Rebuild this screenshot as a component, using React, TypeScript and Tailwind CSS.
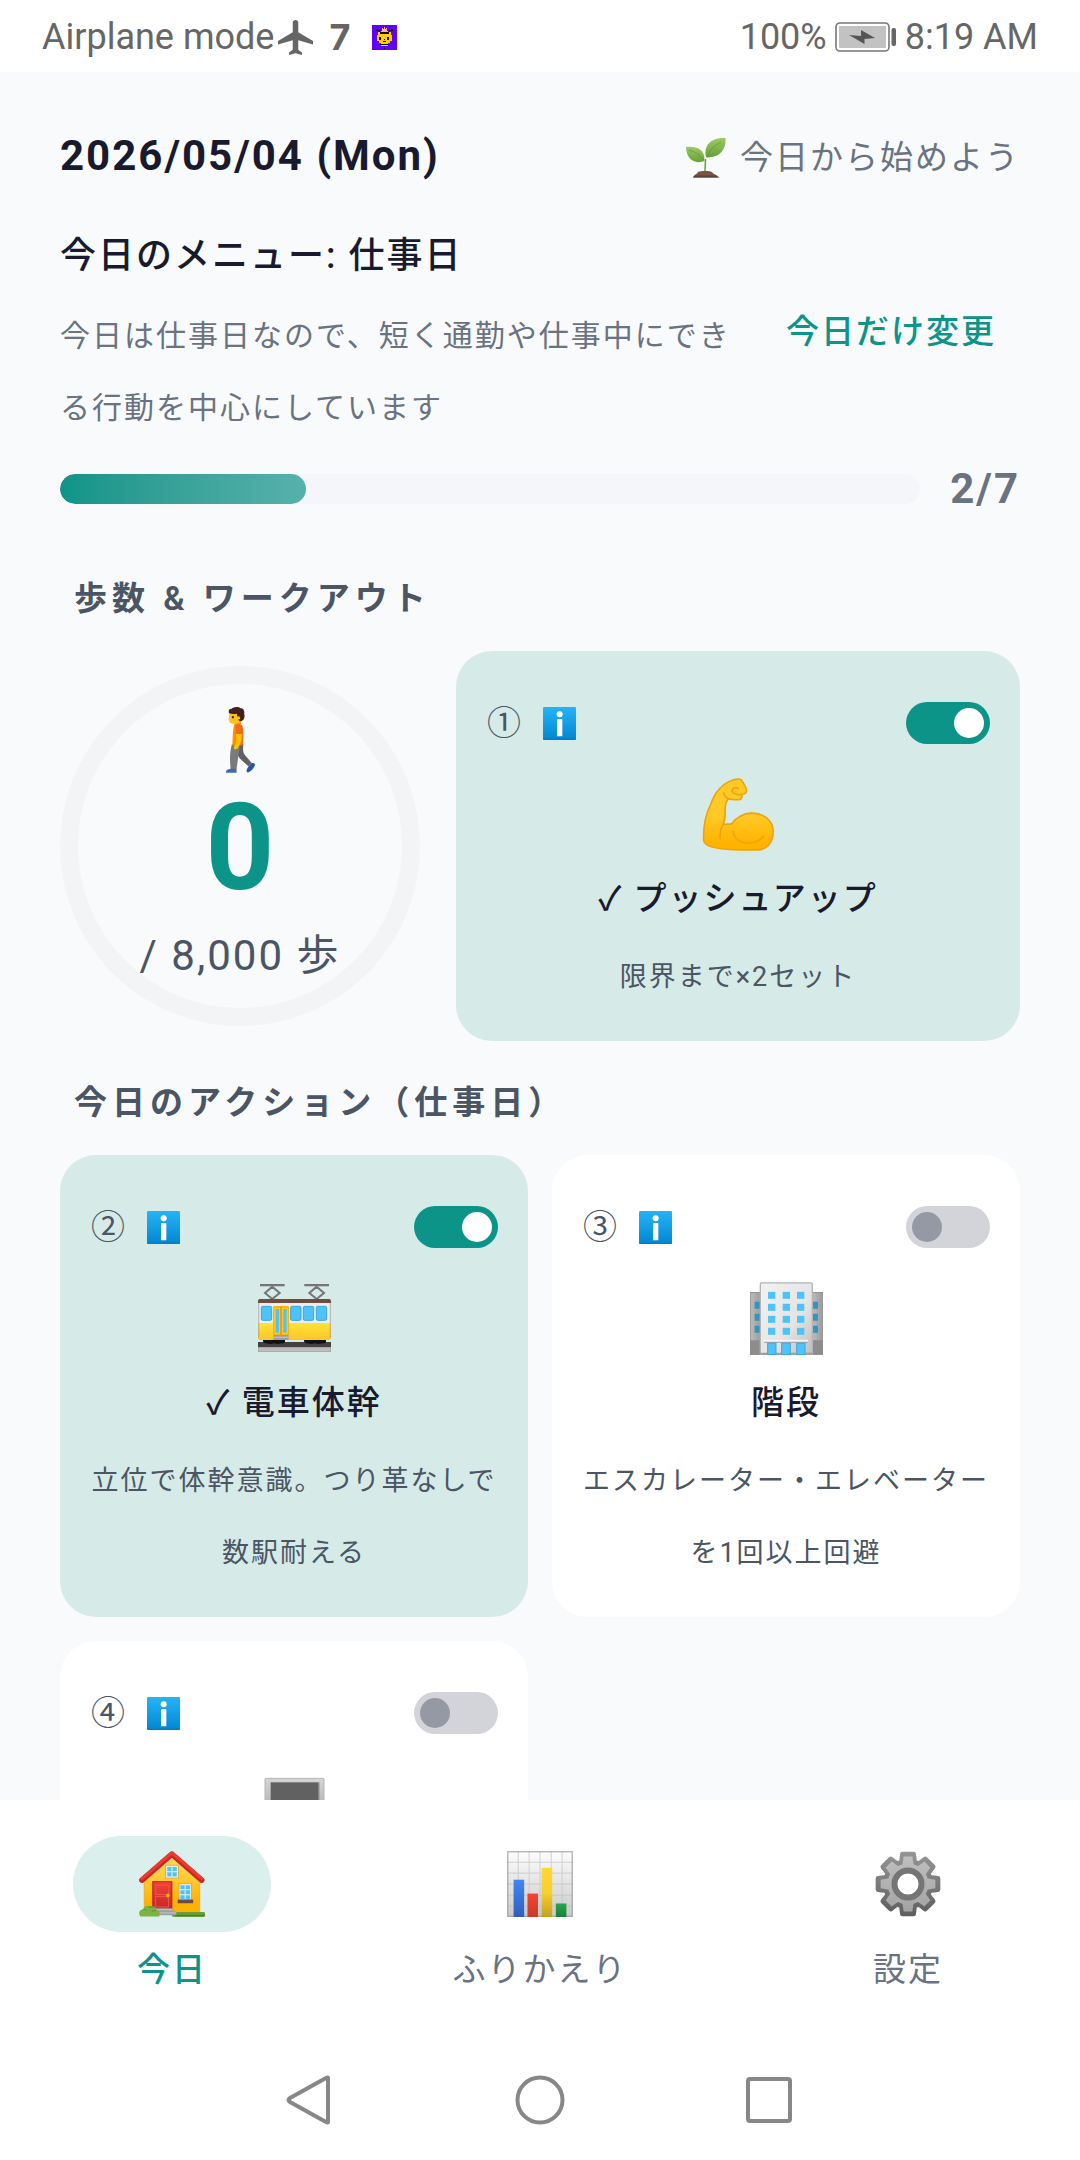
import { useState, type ReactNode } from "react"

/* ---------- Status bar icons ---------- */

function AirplaneIcon() {
  return (
    <svg viewBox="2 2 19 20" className="h-[35px] w-[35px]" fill="#666666" preserveAspectRatio="none" aria-hidden="true">
      <path d="M21 16v-2l-8-5V3.5c0-.83-.67-1.5-1.5-1.5S10 2.67 10 3.5V9l-8 5v2l8-2.5V19l-2 1.5V22l3.5-1 3.5 1v-1.5L13 19v-5.5l8 2.5z" />
    </svg>
  )
}

function BeeIcon() {
  return (
    <svg viewBox="0 0 25 25" className="size-[25px]" shapeRendering="crispEdges" aria-hidden="true">
      <rect width="25" height="25" fill="#6200ff" />
      <path d="M4 4h2v1h2v2h-1v-1h-3zM21 4h-2v1h-2v2h1v-1h3z" fill="#111" />
      <path d="M10 3h1v1h1v-2h1v2h1v-1h1v3h-5z" fill="#ffb199" />
      <path d="M9 6h7v1h3v3h1v6h-2v2h-2v3h-7v-3h-2v-2h-2v-6h1v-3h3z" fill="#ffcc00" />
      <path d="M8 7h9v2h-9zM7 12h2v3h-2zM15 12h2v3h-2zM12 14h1v1h-1zM11 16h3v1h-3zM8 19h8v1h-8zM12 22h1v2h-1z" fill="#111" />
    </svg>
  )
}

function BatteryIcon() {
  return (
    <svg viewBox="0 0 62 30" className="h-[30px] w-[62px]" aria-hidden="true">
      <rect x="1" y="1" width="53" height="28" rx="4" fill="#fff" stroke="#777" strokeWidth="1.6" />
      <rect x="4" y="4" width="47" height="22" rx="1" fill="#c2c2c2" />
      <path d="M14 13l12 1v-6l14 8-10.500 1v5z" fill="#555" />
      <rect x="56.500" y="6" width="4.500" height="18" rx="2" fill="#666" />
    </svg>
  )
}

/* ---------- Content icons ---------- */

function SeedlingIcon() {
  return (
    <svg viewBox="0 0 40 40" className="size-10" aria-hidden="true">
      <defs>
        <linearGradient id="leaf" x1="0" y1="0" x2="0" y2="1">
          <stop offset="0" stopColor="#9ccc65" />
          <stop offset="1" stopColor="#689f38" />
        </linearGradient>
      </defs>
      <path d="M19.500 21c0 4-.5 8-.5 13" stroke="#689f38" strokeWidth="1.500" fill="none" />
      <path d="M7 39.500c1-3 4-3 5-5.500 1-1.500 13-1.500 14 0 1 2.500 5 2.500 7 5.500z" fill="#795548" />
      <path d="M7 39.500l2-2h21l3 2z" fill="#5d4037" />
      <path d="M0 9c9-1 19 1 18.500 14C8 27 0 20 0 9z" fill="url(#leaf)" />
      <path d="M39.500 0c1 11-6 21-19.500 19C17 7 26-1 39.500 0z" fill="url(#leaf)" />
      <path d="M3 12c7 2 11 5 15 10M35 4c-8 4-12 9-14 16" stroke="#558b2f" strokeWidth=".6" fill="none" />
    </svg>
  )
}

function WalkingIcon() {
  return (
    <svg viewBox="0 0 88 200" className="h-[66px] w-[29px]" aria-hidden="true">
      <defs>
        <linearGradient id="shirt" x1="0" y1="0" x2="1" y2="0">
          <stop offset="0" stopColor="#ff9800" />
          <stop offset="1" stopColor="#f4661e" />
        </linearGradient>
      </defs>
      <path d="M36 112l17 0c-2 14-2 24 3 32l22 26-10 10-26-24c-8-8-12-26-10-38z" fill="#616161" />
      <path d="M18 112l24 4-10 72h-18c-3-28-3-50 4-76z" fill="#7b7b7b" />
      <path d="M0 199c-1-8 4-10 14-12h18v12z" fill="#4667b0" />
      <path d="M72 176c4-4 6-6 8-6 4 0 8 2 8 5-2 10-12 20-22 24l-4-5c2-8 4-12 10-18z" fill="#2a56a8" />
      <path d="M26 42h20v14h-20z" fill="#f9a800" />
      <path d="M25 54c6-4 18-5 24 2 5 14 3 44 2 61h-32c2-28 1-48 6-63z" fill="url(#shirt)" />
      <path d="M31 78h16c2 16 0 28-8 40-1 8-8 12-15 9 0-6 1-9 5-14 4-10 1-22 2-35z" fill="#ffc107" />
      <path d="M30 54c10-4 19-2 20 8 1 9 0 14-1 19-6 2-13 1-19-1z" fill="#f06a1a" />
      <path d="M11 16h30v26c-4 12-22 10-30 5-2-4 0-5-3-9z" fill="#fcc21b" />
      <path d="M9 19c-2-8 1-15 6-12C24-2 38-1 45 4c8 0 12 8 10 16 4 10-1 22-9 23-8 0-11-5-10-12-3-4-3-7-2-11-8 2-18 2-25-1z" fill="#43211b" />
      <circle cx="21" cy="31" r="3.500" fill="#43211b" />
      <circle cx="38" cy="33" r="5" fill="#fcc21b" />
    </svg>
  )
}

function InfoIcon() {
  return (
    <svg viewBox="0 0 99 99" className="size-[33px]" aria-hidden="true">
      <defs>
        <linearGradient id="info" x1="0" y1="0" x2="0" y2="1">
          <stop offset="0" stopColor="#26b4f6" />
          <stop offset="1" stopColor="#0286d1" />
        </linearGradient>
      </defs>
      <rect width="99" height="99" rx="4" fill="url(#info)" />
      <path d="M0 94h99v2a3 3 0 0 1-3 3H3a3 3 0 0 1-3-3z" fill="#0277bd" opacity=".5" />
      <circle cx="50" cy="22" r="9" fill="#fff" />
      <rect x="42" y="36" width="16" height="52" rx="2" fill="#fff" />
    </svg>
  )
}

function MuscleIcon() {
  return (
    <svg viewBox="-2 -2 219 222" className="size-[73px]" aria-hidden="true">
      <defs>
        <linearGradient id="arm" x1="0" y1="0" x2="0" y2="1">
          <stop offset=".5" stopColor="#ffca28" />
          <stop offset=".9" stopColor="#ffb300" />
        </linearGradient>
      </defs>
      <g stroke="#f0a30a" strokeWidth="5" strokeLinejoin="round" strokeLinecap="round">
        <path
          d="M1 183C1 150 6 110 23 78C36 40 62 14 90 4C104 0 112-1 117 5C121 12 124 15 127 22C133 32 134 40 127 45C122 48 118 46 118 52C118 60 114 64 107 64C96 64 86 64 77 61C66 72 66 86 67 100C68 116 65 130 61 139C70 139 78 138 86 138C100 120 118 106 147 105C184 104 213 128 213 160C213 196 193 217 165 217C130 217 90 218 55 213C20 209 1 202 1 183Z"
          fill="url(#arm)"
        />
        <path d="M61 139C52 152 50 165 52 182M91 160C96 204 164 206 184 174M77 61C70 58 64 50 63 44M118 48C104 50 90 46 88 38C88 28 96 26 106 29" fill="none" />
      </g>
    </svg>
  )
}

function TramIcon() {
  return (
    <svg viewBox="0 0 219 204" className="h-[68px] w-[73px]" aria-hidden="true">
      <defs>
        <linearGradient id="tram" x1="0" y1="0" x2="0" y2="1">
          <stop offset="0" stopColor="#fde335" />
          <stop offset="1" stopColor="#fbc52b" />
        </linearGradient>
      </defs>
      <path d="M6 3h74M139 3h74" stroke="#757575" strokeWidth="7" />
      <path d="M43 8l22 19-22 18-22-18zM176 8l22 19-22 18-22-18z" fill="none" stroke="#757575" strokeWidth="6" />
      <rect x="0" y="50" width="219" height="118" rx="6" fill="#eeeeee" />
      <path d="M0 117h219v45q0 6-6 6H6q-6 0-6-6z" fill="url(#tram)" />
      <path d="M2 56v106M217 56v106" stroke="#9e9e9e" strokeWidth="4" opacity=".6" />
      <path d="M0 57v-6q0-6 6-6h207q6 0 6 6v6z" fill="#6d4c41" />
      <g fill="#4fc3f7" stroke="#3da7da" strokeWidth="3">
        <rect x="10" y="67" width="31" height="42" rx="4" />
        <rect x="98" y="67" width="31" height="42" rx="4" />
        <rect x="136" y="67" width="31" height="42" rx="4" />
        <rect x="175" y="67" width="31" height="42" rx="4" />
      </g>
      <rect x="45" y="66" width="48" height="88" rx="4" fill="#ffb300" />
      <rect x="51" y="73" width="14" height="75" fill="#4fc3f7" stroke="#fdc830" strokeWidth="4" />
      <rect x="74" y="73" width="14" height="75" fill="#4fc3f7" stroke="#fdc830" strokeWidth="4" />
      <path d="M69 68v84" stroke="#f59300" strokeWidth="4" />
      <rect x="0" y="174" width="219" height="16" fill="#424242" />
      <rect x="1" y="190" width="217" height="13" fill="#bdbdbd" stroke="#9e9e9e" strokeWidth="2" />
      <path d="M15 168h66v6q-4 6-11 4-11 4-22 0-11 4-22 0-9 1-11-6zM138 168h66v6q-4 6-11 4-11 4-22 0-11 4-22 0-9 1-11-6z" fill="#111" />
      <rect x="46" y="153" width="46" height="15" fill="#9e9e9e" />
      <path d="M46 160h46" stroke="#bdbdbd" strokeWidth="4" />
    </svg>
  )
}

const floors = [29, 65, 101, 137]

function OfficeIcon() {
  return (
    <svg viewBox="0 0 219 218" className="size-[73px]" aria-hidden="true">
      <defs>
        <linearGradient id="tower" x1="0" y1="0" x2="1" y2="1">
          <stop offset=".1" stopColor="#f0f0f0" />
          <stop offset=".6" stopColor="#e4e4e4" />
          <stop offset="1" stopColor="#bdbdbd" />
        </linearGradient>
        <linearGradient id="wing" x1="0" y1="0" x2="1" y2="0">
          <stop offset="0" stopColor="#bdbdbd" />
          <stop offset="1" stopColor="#9a9a9a" />
        </linearGradient>
      </defs>
      <rect x="1" y="31" width="32" height="187" fill="url(#wing)" stroke="#949494" strokeWidth="3" />
      <rect x="186" y="31" width="32" height="187" fill="url(#wing)" stroke="#949494" strokeWidth="3" />
      <path d="M0 174h30v44H0zM189 174h30v44h-30z" fill="#8c8c8c" />
      <path d="M14 59h16v21H14zM14 95h16v21H14zM14 131h16v21H14zM189 59h15v21h-15zM189 95h15v21h-15zM189 131h15v21h-15z" fill="#3594bd" />
      <rect x="31" y="2" width="156" height="216" rx="3" fill="url(#tower)" stroke="#b5b5b5" strokeWidth="4" />
      {floors.map((y) => (
        <g key={y} fill="#4fc3f7">
          <rect x="54" y={y} width="22" height="21" />
          <rect x="98" y={y} width="22" height="21" />
          <rect x="141" y={y} width="22" height="21" />
        </g>
      ))}
      <rect x="42" y="173" width="132" height="6" fill="#f5f5f5" />
      <rect x="42" y="179" width="132" height="3" fill="#9e9e9e" />
      <path d="M31 212h156v6H31z" fill="#9e9e9e" />
      <g fill="#4fc3f7" stroke="#3da7da" strokeWidth="3">
        <rect x="53" y="183" width="25" height="34" />
        <rect x="95" y="183" width="26" height="34" />
        <rect x="140" y="183" width="25" height="34" />
      </g>
    </svg>
  )
}

function ElevatorIcon() {
  return (
    <svg viewBox="0 0 219 219" className="size-[73px]" aria-hidden="true">
      <defs>
        <linearGradient id="frame" x1="0" y1="0" x2="0" y2="1">
          <stop offset="0" stopColor="#d6d6d6" />
          <stop offset=".5" stopColor="#b0b0b0" />
        </linearGradient>
      </defs>
      <rect x="21" y="31" width="177" height="186" rx="3" fill="url(#frame)" stroke="#b5b5b5" strokeWidth="3" />
      <rect x="38" y="43" width="144" height="174" fill="#616161" />
      <path d="M183 43v174" stroke="#8a8a8a" strokeWidth="3" />
    </svg>
  )
}

/* ---------- Tab icons ---------- */

function HouseIcon() {
  return (
    <svg viewBox="0 0 201 200" className="size-[66px]" aria-hidden="true">
      <defs>
        <linearGradient id="wall" x1="0" y1="0" x2="0" y2="1">
          <stop offset=".2" stopColor="#ffd54f" />
          <stop offset=".8" stopColor="#ffb300" />
        </linearGradient>
        <linearGradient id="door" x1="0" y1="0" x2="0" y2="1">
          <stop offset="0" stopColor="#f44336" />
          <stop offset="1" stopColor="#c62828" />
        </linearGradient>
      </defs>
      <path d="M16 84L100 16l85 68v103H16z" fill="url(#wall)" stroke="#f5a000" strokeWidth="2" />
      <path d="M9 88L100 9l91 79" fill="none" stroke="#c62828" strokeWidth="17" strokeLinecap="round" strokeLinejoin="round" />
      <path d="M9 84L100 5l91 79" fill="none" stroke="#ef3b32" strokeWidth="9" strokeLinecap="round" strokeLinejoin="round" />
      <rect x="81" y="43" width="39" height="39" fill="#e8f5fb" stroke="#f0a92c" strokeWidth="3" />
      <path d="M86 48h13v13H86zM102 48h13v13h-13zM86 64h13v13H86zM102 64h13v13h-13z" fill="#4fc3f7" />
      <rect x="42" y="93" width="58" height="82" fill="url(#door)" stroke="#b71c1c" strokeWidth="3" />
      <path d="M51 104h39v28H51zM51 138h39v32H51z" fill="none" stroke="#ef5350" strokeWidth="3" />
      <circle cx="88" cy="135" r="6" fill="#ffc107" stroke="#e65100" strokeWidth="1" />
      <rect x="122" y="99" width="38" height="50" fill="#e8f5fb" stroke="#f0a92c" strokeWidth="3" />
      <path d="M126 104h13v12h-13zM142 104h14v12h-14zM126 119h13v12h-13zM142 119h14v12h-14zM126 134h13v12h-13zM142 134h14v12h-14z" fill="#4fc3f7" />
      <rect x="118" y="147" width="47" height="12" rx="2" fill="#6d4c41" />
      <rect x="100" y="185" width="101" height="15" rx="4" fill="#689f38" />
      <path d="M108 199h91l2-5h-93z" fill="#4f7f22" />
      <path d="M52 174h54v9h8v12H52z" fill="#9e9e9e" />
      <path d="M52 178h53M52 188h61" stroke="#bdbdbd" strokeWidth="4" />
      <path d="M4 199c-8-10-2-22 9-22 2-10 14-15 24-9 12-2 18 8 16 12 12 2 12 14 8 19z" fill="#7cb342" />
      <path d="M14 178c4-1 6 1 8 4M30 172c6-4 12-2 14 2M40 184c4-3 8-4 13-3" stroke="#558b2f" strokeWidth="3" fill="none" />
    </svg>
  )
}

function ChartIcon() {
  return (
    <svg viewBox="0 0 200 200" className="size-[66px]" aria-hidden="true">
      <defs>
        <linearGradient id="paper" x1="0" y1="0" x2="0" y2="1">
          <stop offset="0" stopColor="#fdfdfd" />
          <stop offset="1" stopColor="#c9c9c9" />
        </linearGradient>
        <linearGradient id="barBlue" x1="0" y1="0" x2="0" y2="1">
          <stop offset="0" stopColor="#4285f4" />
          <stop offset="1" stopColor="#305fba" />
        </linearGradient>
        <linearGradient id="barRed" x1="0" y1="0" x2="0" y2="1">
          <stop offset="0" stopColor="#f44336" />
          <stop offset="1" stopColor="#ca3a25" />
        </linearGradient>
        <linearGradient id="barYellow" x1="0" y1="0" x2="0" y2="1">
          <stop offset="0" stopColor="#fdd835" />
          <stop offset=".5" stopColor="#f7cf30" />
          <stop offset="1" stopColor="#c3a11f" />
        </linearGradient>
        <linearGradient id="barGreen" x1="0" y1="0" x2="0" y2="1">
          <stop offset="0" stopColor="#26a84c" />
          <stop offset="1" stopColor="#1b7e39" />
        </linearGradient>
      </defs>
      <rect width="200" height="200" fill="url(#paper)" />
      <path d="M34 0v200M67 0v200M100 0v200M134 0v200M167 0v200M0 34h200M0 67h200M0 100h200M0 134h200M0 167h200" stroke="#bdbdbd" strokeWidth="3" opacity=".65" />
      <rect x="2" y="2" width="196" height="196" fill="none" stroke="#9e9e9e" strokeWidth="5" opacity=".7" />
      <rect x="20" y="87" width="32" height="113" fill="url(#barBlue)" />
      <rect x="62" y="129" width="32" height="71" fill="url(#barRed)" />
      <rect x="105" y="51" width="32" height="149" fill="url(#barYellow)" />
      <rect x="148" y="159" width="32" height="41" fill="url(#barGreen)" />
    </svg>
  )
}

const teeth = [0, 45, 90, 135, 180, 225, 270, 315]

function GearIcon() {
  return (
    <svg viewBox="0 0 200 200" className="size-[66px]" aria-hidden="true">
      <defs>
        <linearGradient id="rim" gradientUnits="userSpaceOnUse" x1="0" y1="0" x2="0" y2="200">
          <stop offset="0" stopColor="#979797" />
          <stop offset="1" stopColor="#5c5c5c" />
        </linearGradient>
        <linearGradient id="disc" gradientUnits="userSpaceOnUse" x1="0" y1="0" x2="0" y2="200">
          <stop offset="0" stopColor="#c2c2c2" />
          <stop offset="1" stopColor="#a0a0a0" />
        </linearGradient>
        <mask id="rimShape">
          <circle cx="100" cy="100" r="76" fill="#fff" />
          {teeth.map((a) => (
            <path key={a} d="M72 40L76 8q1-6 7-6h34q6 0 7 6l4 32z" fill="#fff" transform={`rotate(${a} 100 100)`} />
          ))}
        </mask>
        <mask id="discShape">
          <circle cx="100" cy="100" r="62" fill="#fff" />
          {teeth.map((a) => (
            <path key={a} d="M82 46l5-29h26l5 29z" fill="#fff" transform={`rotate(${a} 100 100)`} />
          ))}
        </mask>
      </defs>
      <rect width="200" height="200" fill="url(#rim)" mask="url(#rimShape)" />
      <rect width="200" height="200" fill="url(#disc)" mask="url(#discShape)" />
      <circle cx="100" cy="100" r="41" fill="#fff" stroke="#757575" strokeWidth="18" />
    </svg>
  )
}

/* ---------- Data ---------- */

type Action = {
  id: string
  number: string
  title?: string
  detail?: string
  icon: ReactNode
  done: boolean
}

const workout: Action = {
  id: "pushup",
  number: "①",
  title: "プッシュアップ",
  detail: "限界まで×2セット",
  icon: <MuscleIcon />,
  done: true,
}

const actions: Action[] = [
  { id: "train", number: "②", title: "電車体幹", detail: "立位で体幹意識。つり革なしで数駅耐える", icon: <TramIcon />, done: true },
  { id: "stairs", number: "③", title: "階段", detail: "エスカレーター・エレベーターを1回以上回避", icon: <OfficeIcon />, done: false },
  { id: "next", number: "④", icon: <ElevatorIcon />, done: false },
]

const tabs = [
  { id: "today", label: "今日", icon: <HouseIcon /> },
  { id: "review", label: "ふりかえり", icon: <ChartIcon /> },
  { id: "settings", label: "設定", icon: <GearIcon /> },
]

/* ---------- Components ---------- */

function ActionCard({ action }: { action: Action }) {
  const [done, setDone] = useState(action.done)

  return (
    <article className={`rounded-[36px] px-[30px] pt-[30px] pb-7 ${done ? "bg-[#d6eae8]" : "bg-white"}`}>
      <div className="flex h-[84px] items-center justify-between">
        <div className="flex items-center gap-[22px] pl-px">
          <label htmlFor={action.id} className="text-[34px] leading-[72px] text-[#4b5563]">
            {action.number}
          </label>
          <button type="button" aria-label="info">
            <InfoIcon />
          </button>
        </div>
        <input
          id={action.id}
          type="checkbox"
          role="switch"
          checked={done}
          onChange={(e) => setDone(e.target.checked)}
          className="flex h-[42px] w-[84px] appearance-none items-center rounded-full bg-[#d3d4da] px-[6px] before:size-[30px] before:rounded-full before:bg-[#9499a4] checked:justify-end checked:bg-[#0d9488] checked:before:bg-white"
        />
      </div>
      <div className="flex h-[98px] items-center justify-center">{action.icon}</div>
      {action.title && (
        <h3 className="text-center text-[33px] leading-[72px] font-medium tracking-[2px] text-[#1a1a2e]">
          {done && "✓ "}
          {action.title}
        </h3>
      )}
      {action.detail && (
        <p className="mt-[6px] text-center text-[27px] leading-[72px] tracking-[2px] text-[#4b5563]">{action.detail}</p>
      )}
    </article>
  )
}

function SectionTitle({ children }: { children: ReactNode }) {
  return <h2 className="mb-4 px-[14px] text-[33px] leading-[72px] font-semibold tracking-[5px] text-[#4b5563]">{children}</h2>
}

function StatusBar() {
  return (
    <div className="flex h-[72px] shrink-0 items-center justify-between bg-white px-[42px] pt-[2px] text-[36px] text-[#666666]">
      <div className="flex items-center">
        <span>Airplane mode</span>
        <span className="ml-1">
          <AirplaneIcon />
        </span>
        <span className="mr-[22px] ml-4 font-['Inter'] text-[36px] font-bold">7</span>
        <BeeIcon />
      </div>
      <div className="flex items-center gap-2">
        <span>100%</span>
        <BatteryIcon />
        <span>8:19 AM</span>
      </div>
    </div>
  )
}

function StepRing({ steps, goal }: { steps: number; goal: number }) {
  return (
    <div className="flex size-[360px] shrink-0 flex-col items-center justify-center rounded-full border-[18px] border-[#f3f4f6] pt-1">
      <div className="flex h-[72px] items-center">
        <WalkingIcon />
      </div>
      <div className="mt-3 text-[120px] leading-[120px] font-bold text-[#0d9488]">{steps}</div>
      <div className="mt-3 text-[42px] leading-[72px] tracking-[2px] text-[#4b5563]">/ {goal.toLocaleString("en-US")} 歩</div>
    </div>
  )
}

export default function App() {
  const [tab, setTab] = useState("today")
  const done = 2
  const total = 7

  return (
    <div className="flex h-screen flex-col bg-[#f8fafc] font-['Roboto','Noto_Sans_CJK_JP',sans-serif]" lang="ja">
      <StatusBar />

      <main className="min-h-0 flex-1 overflow-y-auto px-[60px] pt-12 [scrollbar-width:none]">
        {/* Date and streak */}
        <header className="flex items-start justify-between">
          <h1 className="text-[42px] leading-[72px] font-bold tracking-[2px] text-[#1a1a2e]">2026/05/04 (Mon)</h1>
          <div className="flex items-center gap-[14px] pt-[2px] text-[33px] leading-[72px] tracking-[2px] text-[#6b7280]">
            <SeedlingIcon />
            今日から始めよう
          </div>
        </header>

        {/* Menu of the day */}
        <section className="mt-[26px] flex items-center gap-3">
          <div className="flex-1">
            <h2 className="text-[36px] leading-[72px] font-medium tracking-[2px] text-[#1a1a2e]">今日のメニュー: 仕事日</h2>
            <p className="mt-2 text-[30px] leading-[72px] tracking-[2px] text-[#6b7280]">
              今日は仕事日なので、短く通勤や仕事中にできる行動を中心にしています
            </p>
          </div>
          <button type="button" className="px-6 text-[33px] leading-[72px] font-medium tracking-[2px] text-[#0d9488]">
            今日だけ変更
          </button>
        </section>

        {/* Progress */}
        <div className="mt-[9px] flex items-center gap-[30px]">
          <div
            role="progressbar"
            aria-valuenow={done}
            aria-valuemax={total}
            className="h-[30px] flex-1 overflow-hidden rounded-full bg-[#f5f6fa]"
          >
            <div
              className="h-full rounded-full bg-linear-to-r from-[#0d9488] to-[#56b1ac]"
              style={{ width: `${(done / total) * 100}%` }}
            />
          </div>
          <span className="text-[42px] leading-[72px] font-bold tracking-[2px] text-[#6b7280]">
            {done}/{total}
          </span>
        </div>

        <section className="mt-[38px]">
          <SectionTitle>歩数 &amp; ワークアウト</SectionTitle>
          <div className="flex items-center gap-9">
            <StepRing steps={0} goal={8000} />
            <div className="flex-1">
              <ActionCard action={workout} />
            </div>
          </div>
        </section>

        <section className="mt-[26px]">
          <SectionTitle>今日のアクション（仕事日）</SectionTitle>
          <div className="grid grid-cols-2 gap-6">
            {actions.map((action) => (
              <ActionCard key={action.id} action={action} />
            ))}
          </div>
        </section>
      </main>

      <nav className="grid h-[240px] shrink-0 grid-cols-3 gap-6 bg-white pt-9">
        {tabs.map((t) => (
          <button key={t.id} type="button" onClick={() => setTab(t.id)} className="flex flex-col items-center gap-[2px]">
            <span
              className={`flex h-24 w-[198px] items-center justify-center rounded-full ${
                tab === t.id ? "bg-[#dbefec]" : ""
              }`}
            >
              {t.icon}
            </span>
            <span
              className={`text-[33px] leading-[72px] tracking-[2px] ${
                tab === t.id ? "font-medium text-[#0d9488]" : "text-[#6b7280]"
              }`}
            >
              {t.label}
            </span>
          </button>
        ))}
      </nav>

      {/* System navigation */}
      <div className="flex h-[120px] shrink-0 items-center justify-center gap-[180px] bg-white">
        <button type="button" aria-label="back">
          <svg viewBox="0 0 50 50" className="size-[50px]" fill="none" stroke="#878787" strokeWidth="4" strokeLinejoin="round">
            <path d="M43 3v44q0 1-2 0L5 27q-3-2 0-4L41 3q2-1 2 0z" />
          </svg>
        </button>
        <button type="button" aria-label="home">
          <svg viewBox="0 0 50 50" className="size-[50px]" fill="none" stroke="#878787" strokeWidth="4">
            <circle cx="25" cy="25" r="22.500" />
          </svg>
        </button>
        <button type="button" aria-label="recent apps">
          <svg viewBox="0 0 50 50" className="size-[50px]" fill="none" stroke="#878787" strokeWidth="4">
            <rect x="3" y="4" width="42" height="42" rx="2" />
          </svg>
        </button>
      </div>
    </div>
  )
}
